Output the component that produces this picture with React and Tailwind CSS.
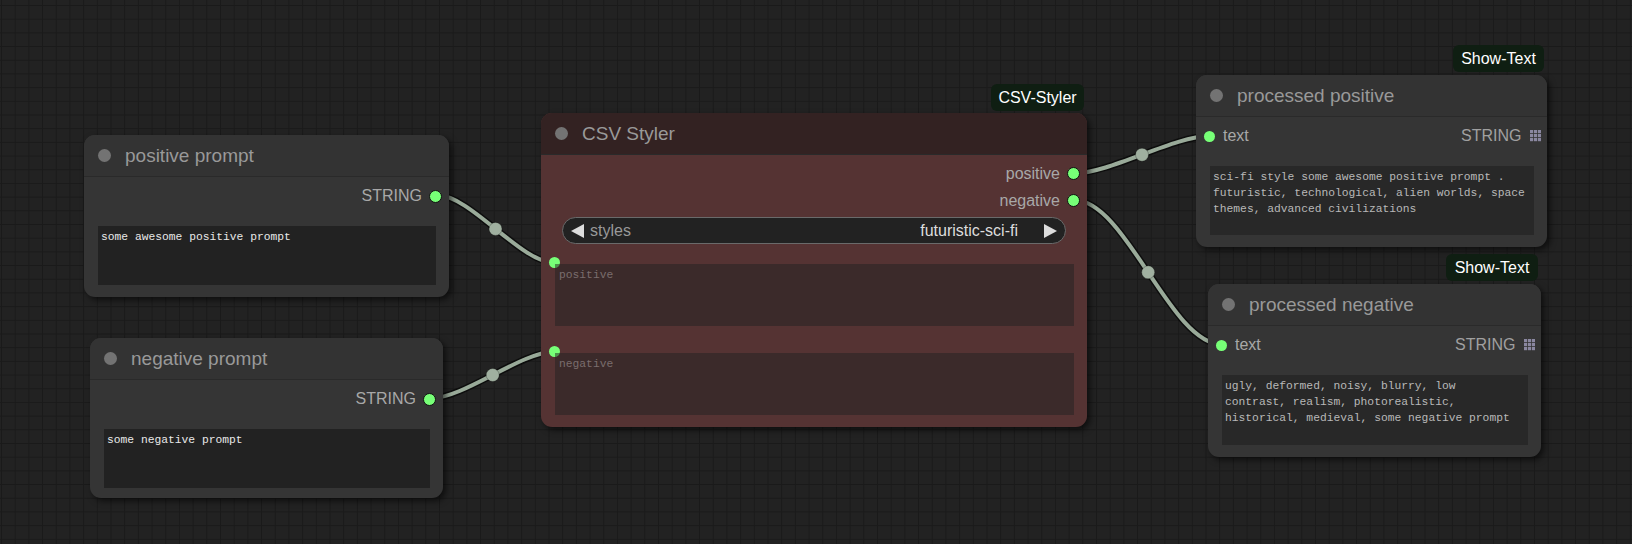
import React from "react";

const SANS = "font-['Liberation_Sans',Arial,sans-serif]";
const MONO = "font-['Liberation_Mono','DejaVu_Sans_Mono',monospace]";

function OutDot() {
  return <div className="w-[13px] h-[13px] rounded-full bg-[#77ff77] border border-[#111] shrink-0" />;
}

function GridIcon() {
  const cells = [];
  for (const x of [0, 4, 8]) for (const y of [0, 4, 8]) cells.push(<rect key={x + "-" + y} x={x} y={y} width="3.2" height="3.2" fill="#8a87a0" />);
  return (
    <svg width="11.5" height="11.5" viewBox="0 0 11.5 11.5" className="shrink-0">
      {cells}
    </svg>
  );
}

function Title({ text, bg }) {
  return (
    <div className={`h-[42px] flex items-center border-b border-[#2a2a2a] shrink-0 ${bg}`}>
      <div className="ml-[14px] w-[13px] h-[13px] rounded-full bg-[#737373]" />
      <div className="ml-[14px] text-[19px] text-[#999] leading-none">{text}</div>
    </div>
  );
}

function Badge({ cls, text }) {
  return (
    <div className={`absolute h-[27px] rounded-[6px] bg-[#0f1e12] flex items-center justify-center text-white text-[16px] ${cls}`}>
      {text}
    </div>
  );
}

function PromptNode({ cls, title, text }) {
  return (
    <div className={`absolute rounded-[11px] overflow-hidden bg-[#353535] shadow-[3px_3px_6px_rgba(0,0,0,0.6)] flex flex-col ${cls}`}>
      <Title text={title} bg="bg-[#333]" />
      <div className="mt-[5px] h-[28px] flex items-center justify-end gap-[7px] pr-[7px]">
        <span className="text-[16px] text-[#a8a8a8] leading-none">STRING</span>
        <OutDot />
      </div>
      <div className={`mt-[16px] ml-[14px] mr-[13px] h-[59px] bg-[#222] px-[3px] pt-[3px] text-[11.3px] leading-[16px] text-[#e8e8e8] ${MONO}`}>
        {text}
      </div>
    </div>
  );
}

function ShowNode({ cls, title, lines, taCls }) {
  return (
    <div className={`absolute rounded-[11px] overflow-hidden bg-[#353535] shadow-[3px_3px_6px_rgba(0,0,0,0.6)] flex flex-col ${cls}`}>
      <Title text={title} bg="bg-[#333]" />
      <div className="mt-[5px] h-[28px] flex items-center pl-[8px] pr-[6px]">
        <div className="w-[11px] h-[11px] rounded-full bg-[#77ff77] shrink-0" />
        <span className="ml-[8px] text-[16px] text-[#a8a8a8] leading-none">text</span>
        <span className="ml-auto text-[16px] text-[#a0a0a0] leading-none">STRING</span>
        <span className="ml-[8px]">
          <GridIcon />
        </span>
      </div>
      <div className={`mt-[16px] ml-[14px] mr-[13px] bg-[#282828] px-[3px] pt-[2.5px] text-[11.3px] leading-[16.4px] text-[#b8b8b8] ${MONO} ${taCls}`}>
        {lines.map((l, i) => (
          <div key={i} className="whitespace-pre">
            {l}
          </div>
        ))}
      </div>
    </div>
  );
}

function Arrow({ dir }) {
  return (
    <svg width="13" height="14" viewBox="0 0 13 14" className="shrink-0">
      {dir === "left" ? <polygon points="13,0 13,14 0,7" fill="#dddddd" /> : <polygon points="0,0 0,14 13,7" fill="#dddddd" />}
    </svg>
  );
}

function CsvNode() {
  return (
    <div className="absolute left-[541px] top-[113px] w-[546px] h-[314px] rounded-[11px] overflow-hidden bg-[#553333] shadow-[3px_3px_6px_rgba(0,0,0,0.6)] flex flex-col">
      <Title text="CSV Styler" bg="bg-[#332222]" />
      <div className="mt-[5px] h-[27px] flex items-center justify-end gap-[7px] pr-[7px]">
        <span className="text-[16px] text-[#a8a8a8] leading-none">positive</span>
        <OutDot />
      </div>
      <div className="h-[27px] flex items-center justify-end gap-[7px] pr-[7px]">
        <span className="text-[16px] text-[#a8a8a8] leading-none">negative</span>
        <OutDot />
      </div>
      <div className="mt-[3px] mx-[21px] h-[27px] rounded-full border border-[#6a6a6a] bg-[#222] flex items-center pl-[8px] pr-[8px]">
        <Arrow dir="left" />
        <span className="ml-[6px] text-[16px] text-[#999] leading-none">styles</span>
        <span className="ml-auto text-[16px] text-[#dddddd] leading-none">futuristic-sci-fi</span>
        <span className="ml-[26px] flex">
          <Arrow dir="right" />
        </span>
      </div>
      <div className="absolute left-[8px] top-[144px] w-[11px] h-[11px] rounded-full bg-[#77ff77]" />
      <div className="absolute left-[8px] top-[233px] w-[11px] h-[11px] rounded-full bg-[#77ff77]" />
      <div className={`relative mt-[20px] ml-[14px] mr-[13px] h-[62px] bg-[#222]/50 px-[4px] pt-[3px] text-[11.3px] leading-[16px] text-[#7a6d6d] ${MONO}`}>
        positive
      </div>
      <div className={`relative mt-[27px] ml-[14px] mr-[13px] h-[62px] bg-[#222]/50 px-[4px] pt-[3px] text-[11.3px] leading-[16px] text-[#7a6d6d] ${MONO}`}>
        negative
      </div>
    </div>
  );
}

const wires = [
  { d: "M436.7 195 C470.6 195 520.4 262.7 554.3 262.7", m: [495.5, 228.9] },
  { d: "M431 398.3 C464 398.3 521.3 351.7 554.3 351.7", m: [492.7, 375] },
  { d: "M1074.6 173.3 C1109.6 173.3 1174.3 136 1209.3 136", m: [1142, 154.7] },
  { d: "M1074.6 200.3 C1126.1 200.3 1170.2 344.3 1221.7 344.3", m: [1148.2, 272.3] },
];

export default function App() {
  return (
    <div
      className={`relative w-[1632px] h-[544px] overflow-hidden bg-[#222222] ${SANS} [background-image:linear-gradient(to_right,#1a1a1a_1px,transparent_1px),linear-gradient(to_bottom,#1a1a1a_1px,transparent_1px)] [background-size:13.7px_13.7px] [background-position:1px_5px]`}
    >
      <svg className="absolute left-0 top-0" width="1632" height="544">
        {wires.map((w, i) => (
          <g key={i}>
            <path d={w.d} stroke="rgba(0,0,0,0.6)" strokeWidth="7" fill="none" />
            <path d={w.d} stroke="#99aa99" strokeWidth="4" fill="none" />
          </g>
        ))}
        {wires.map((w, i) => (
          <circle key={"c" + i} cx={w.m[0]} cy={w.m[1]} r="6.5" fill="#a0b0a0" stroke="rgba(0,0,0,0.25)" strokeWidth="1" />
        ))}
      </svg>

      <PromptNode cls="left-[84px] top-[135px] w-[365px] h-[162px]" title="positive prompt" text="some awesome positive prompt" />
      <PromptNode cls="left-[90px] top-[338px] w-[353px] h-[160px]" title="negative prompt" text="some negative prompt" />

      <CsvNode />
      <Badge cls="left-[991px] top-[84px] w-[93px]" text="CSV-Styler" />

      <ShowNode
        cls="left-[1196px] top-[75px] w-[351px] h-[172px]"
        title="processed positive"
        taCls="h-[69px]"
        lines={["sci-fi style some awesome positive prompt .", "futuristic, technological, alien worlds, space", "themes, advanced civilizations"]}
      />
      <Badge cls="left-[1453px] top-[45px] w-[91px]" text="Show-Text" />

      <ShowNode
        cls="left-[1208px] top-[284px] w-[333px] h-[173px]"
        title="processed negative"
        taCls="h-[70px]"
        lines={["ugly, deformed, noisy, blurry, low", "contrast, realism, photorealistic,", "historical, medieval, some negative prompt"]}
      />
      <Badge cls="left-[1446px] top-[254px] w-[92px]" text="Show-Text" />
    </div>
  );
}
